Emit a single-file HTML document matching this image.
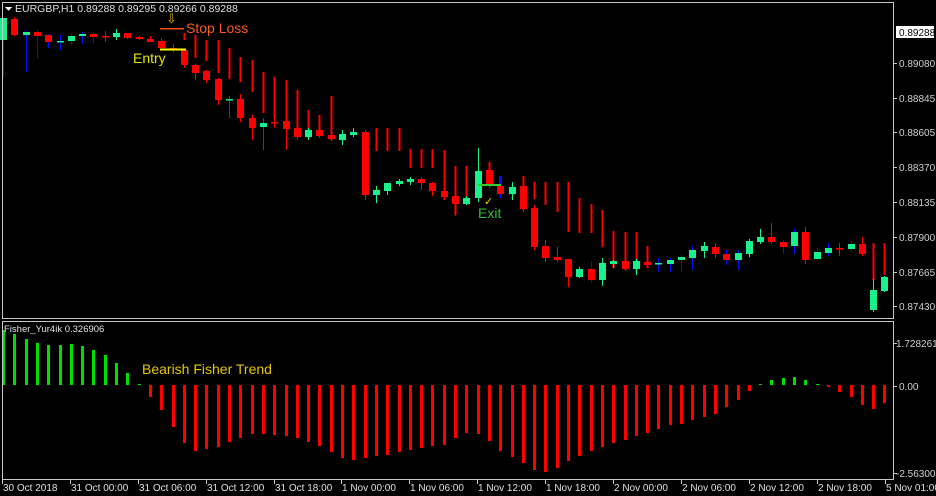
<!DOCTYPE html>
<html><head><meta charset="utf-8"><style>
html,body{margin:0;padding:0;background:#000;width:936px;height:496px;overflow:hidden}
svg{display:block}
text{font-family:"Liberation Sans",sans-serif}
</style></head><body>
<svg id="s" width="936" height="496" xmlns="http://www.w3.org/2000/svg" shape-rendering="crispEdges">
<rect width="936" height="496" fill="#000"/>
<g id="lines"></g>
<g id="candles"></g>
<g id="hist"></g>
<rect x="2.5" y="2.5" width="891" height="316" fill="none" stroke="#c8c8c8"/>
<rect x="2.5" y="321.5" width="891" height="158" fill="none" stroke="#c8c8c8"/>
<polygon points="5,7 12,7 8.5,11" fill="#fff"/>
<text x="15" y="12" font-size="10.5" fill="#e0e0e0">EURGBP,H1  0.89288 0.89295 0.89266 0.89288</text>
<text x="166" y="23" font-size="13" fill="#d4b000">⇩</text>
<line x1="160" y1="28.5" x2="184" y2="28.5" stroke="#ff4a10" stroke-width="1.5"/>
<text x="186" y="33" font-size="14" fill="#ff5a1e">Stop Loss</text>
<line x1="160" y1="49.5" x2="186" y2="49.5" stroke="#ffff00" stroke-width="2"/>
<text x="133" y="63" font-size="14" fill="#e8e800">Entry</text>
<line x1="478" y1="185" x2="501" y2="185" stroke="#33cc33" stroke-width="2"/>
<text x="484" y="205" font-size="11" fill="#e8d800">✓</text>
<text x="478" y="218" font-size="14" fill="#33bb33">Exit</text>
<text x="142" y="374" font-size="14" fill="#e8c800">Bearish Fisher Trend</text>
<text x="4" y="332" font-size="9.5" fill="#e0e0e0">Fisher_Yur4ik 0.326906</text>
<g font-size="10" fill="#d0d0d0" id="axis"></g>
<rect x="896" y="26" width="38" height="12" fill="#fff"/>
<text x="899" y="36" font-size="10" fill="#000">0.89288</text>
<g id="time" font-size="10" fill="#e0e0e0"></g>
</svg>
<script>
var NS="http://www.w3.org/2000/svg";
function el(p,t,a){var e=document.createElementNS(NS,t);for(var k in a)e.setAttribute(k,a[k]);document.getElementById(p).appendChild(e);return e;}
function X(i){return 3+11.3*i;}
var G="#19f28c",R="#ff0000",B="#0010ff";
var C=[
[40,18,18,77,B],[19,35,17,36],[35,32,31,72,B],[32,36,30,58,B],[35,42,34,48,B],[42,41,35,50,B],[41,36,34,45,B],[36,34,32,44,B],[34,37,33,44,B],[36,36,31,42],
[37,33,29,40],[33,38,33,39],[37,39,36,40],[39,42,36,42],[41,48,38,48],[48,50,44,52],[50,65,49,68],[65,73,64,80],[71,80,70,83],[79,100,78,105],
[100,99,96,118,"#0a6a30"],[99,118,94,122],[118,128,115,140],[127,123,118,150,"#0a6a30"],[122,122,118,128],[121,129,118,150],[128,137,125,140],[137,130,128,140],[130,136,128,138],[135,139,133,141],
[140,134,130,145],[135,132,128,137],[132,195,130,200],[195,190,186,203],[191,183,183,195],[184,181,179,186],[182,179,177,185],[179,183,177,190],[183,191,182,196],[191,197,189,200],
[196,204,195,216],[204,198,196,205],[198,171,148,202],[170,185,162,188],[186,194,176,198,B],[194,187,182,200],[186,209,180,212],[208,247,205,250],[246,258,240,262],[257,260,247,262],
[259,277,259,287],[277,269,267,278],[269,280,261,283,B],[280,263,258,286],[264,261,260,268],[261,269,258,271],[269,261,259,275],[262,265,258,268],[264,263,258,272,B],[264,260,258,272,B],
[260,257,255,272,B],[258,250,246,270,B],[251,246,242,258],[247,254,243,258],[254,260,250,265,B],[260,253,250,270,B],[254,241,239,257],[242,237,229,244],[237,242,223,244],[242,247,240,254,B],
[246,232,229,254,B],[232,260,227,264],[259,252,248,261,B],[253,248,243,256,B],[248,248,243,256],[249,244,241,251,B],[244,254,237,256],[310,290,279,312],[291,277,276,292]
];
var L={16:[33,40],17:[35,58],18:[40,61],19:[40,73],20:[48,79],21:[57,82],22:[60,92],23:[72,113],24:[77,118],25:[80,124],26:[90,130],27:[110,132],28:[115,136],29:[96,140],
33:[128,151],34:[128,151],35:[128,151],36:[149,168],37:[149,168],38:[149,168],39:[150,200],40:[166,215],41:[166,200],43:[162,185],44:[176,196],46:[176,210],
47:[182,199],48:[182,205],49:[182,212],50:[182,232],51:[198,233],52:[204,233],53:[210,247],54:[231,268],55:[232,270],56:[232,272],57:[246,268],77:[243,280],78:[243,275]};
for(var k in L){var x=Math.round(X(+k))+0.5;el("lines","line",{x1:x,x2:x,y1:L[k][0],y2:L[k][1],stroke:R,"stroke-width":2});}
C.forEach(function(c,i){var x=Math.round(X(i));var bull=c[1]<c[0];var col=bull?G:R;
 el("candles","line",{x1:x+0.5,x2:x+0.5,y1:c[2],y2:c[3],stroke:c[4]||col,"stroke-width":1});
 var t=Math.min(c[0],c[1]),h=Math.max(1.5,Math.abs(c[0]-c[1]));
 el("candles","rect",{x:x-3,y:t,width:7,height:h,fill:col});});
var H=[330,334,339,343,345,345,344,346,350,355,363,373,384,
397,410,427,443,451,449,447,442,438,434,434,435,436,438,442,446,452,458,460,458,456,455,452,450,448,446,
445,438,433,434,441,451,457,463,470,472,468,461,456,451,447,443,440,436,433,429,425,424,420,417,414,407,400,391,
-384,-380,-378,-377,-380,-384,387,392,397,405,409,403];
var Z=385;
H.forEach(function(v,i){var x=Math.round(X(i));var g=(i<13)||v<0;v=Math.abs(v);
 if(g){el("hist","rect",{x:x-1,y:v,width:3,height:Math.max(1,Z-v),fill:"#00e000"});}
 else{el("hist","rect",{x:x-1,y:Z,width:3,height:Math.max(1,v-Z),fill:R});}});
var P=[["0.89080",63],["0.88845",98],["0.88605",132],["0.88370",167],["0.88135",202],["0.87900",237],["0.87665",272],["0.87430",306],["1.728261",343],["0.00",386],["-2.563004",473]];
P.forEach(function(p){el("axis","line",{x1:894,x2:897,y1:p[1]+0.5,y2:p[1]+0.5,stroke:"#c8c8c8"});
 var t=el("axis","text",{x:p[0].length>7?896:899,y:p[1]+4});t.textContent=p[0];});
var T=[["30 Oct 2018",2],["31 Oct 00:00",70],["31 Oct 06:00",138],["31 Oct 12:00",206],["31 Oct 18:00",274],["1 Nov 00:00",341],["1 Nov 06:00",409],["1 Nov 12:00",477],["1 Nov 18:00",545],["2 Nov 00:00",613],["2 Nov 06:00",681],["2 Nov 12:00",749],["2 Nov 18:00",817],["5 Nov 01:00",885]];
T.forEach(function(t){el("time","line",{x1:t[1]+0.5,x2:t[1]+0.5,y1:480,y2:484,stroke:"#c8c8c8"});
 var e=el("time","text",{x:t[1]+1,y:491});e.textContent=t[0];});
</script>
</body></html>
